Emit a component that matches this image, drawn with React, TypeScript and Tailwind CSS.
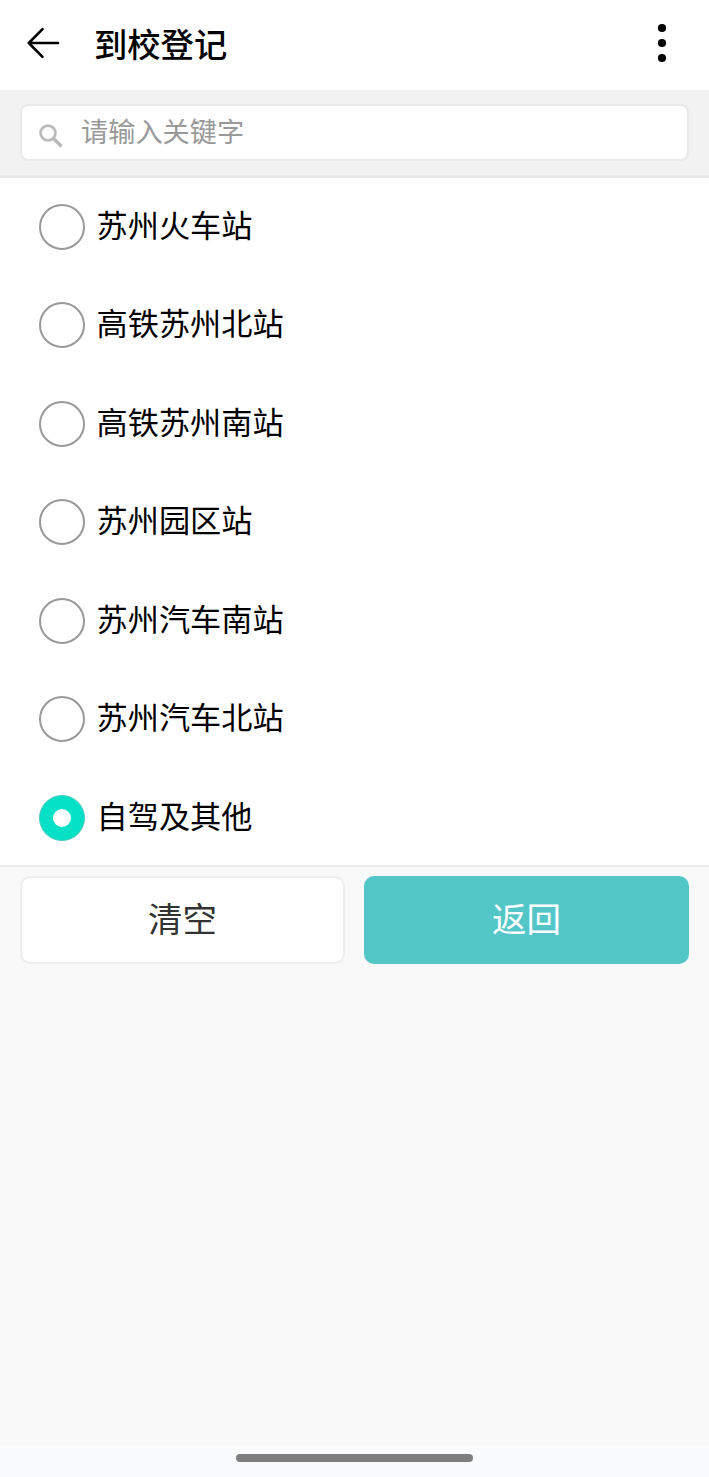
import { useState } from 'react';

const stations = [
  '苏州火车站',
  '高铁苏州北站',
  '高铁苏州南站',
  '苏州园区站',
  '苏州汽车南站',
  '苏州汽车北站',
  '自驾及其他',
];

function Header() {
  return (
    <header className="flex h-[90px] shrink-0 items-center bg-white pb-1 pl-[27px] pr-[42px]">
      <button type="button" aria-label="返回上一页">
        <svg width="34" height="32" viewBox="0 0 34 32" fill="none" stroke="#000" strokeWidth="2.6" strokeLinecap="round" strokeLinejoin="round">
          <path d="M15.5 2.2 1.8 16 15.5 29.8M1.8 16H31" />
        </svg>
      </button>
      <h1 className="ml-[33px] grow pb-px text-[33.3px] leading-10 font-medium text-black">到校登记</h1>
      <button type="button" aria-label="更多">
        <svg width="10" height="40" viewBox="0 0 10 40" fill="#000">
          <circle cx="5" cy="5" r="4.1" />
          <circle cx="5" cy="20" r="4.1" />
          <circle cx="5" cy="35" r="4.1" />
        </svg>
      </button>
    </header>
  );
}

function SearchBar() {
  return (
    <div className="flex h-[88px] shrink-0 flex-col border-b-[3px] border-[#e8e8e8] bg-[#f2f2f2] px-5 pt-[14px]">
      <label className="flex h-[57px] items-center rounded-[8px] border-2 border-[#e9e9e9] bg-white pl-[17px]">
        <svg className="mt-[7px] shrink-0" width="24" height="24" viewBox="0 0 24 24" fill="none" stroke="#bbb">
          <circle cx="9" cy="9" r="7.4" strokeWidth="2.8" />
          <path d="m14.5 14.5 8 8" strokeWidth="3.4" />
        </svg>
        <span className="ml-[18px] pb-[5px] text-[27.2px] leading-9 text-[#999]">请输入关键字</span>
      </label>
    </div>
  );
}

export default function App() {
  const [selected, setSelected] = useState<string | null>('自驾及其他');
  return (
    <div className="flex h-[1477px] w-[709px] flex-col bg-[#f9f9f9] font-['Noto_Sans_CJK_SC',sans-serif]">
      <Header />
      <SearchBar />
      <div className="flex h-[689px] shrink-0 flex-col gap-[52.5px] border-b-2 border-[#ececec] bg-white pt-[25.5px] pl-[39px]">
        {stations.map((name) => (
          <button key={name} type="button" onClick={() => setSelected(name)} className="flex h-[46px] shrink-0 items-center">
            {selected === name ? (
              <span className="flex size-[46px] items-center justify-center rounded-full border border-[#4fcabd] bg-[#04e1c6]">
                <span className="size-[18px] rounded-full bg-white" />
              </span>
            ) : (
              <span className="size-[46px] rounded-full border-2 border-[#999] bg-white" />
            )}
            <span className="ml-[11.5px] pb-[6px] text-[31.2px] leading-[40px] text-black">{name}</span>
          </button>
        ))}
      </div>
      <div className="grid grid-cols-2 gap-[19px] px-5 pt-[9px]">
        <button type="button" onClick={() => setSelected(null)} className="h-[87.5px] rounded-[10px] border-2 border-[#eee] bg-white pb-[3px] text-[34.5px] text-[#333]">
          清空
        </button>
        <button type="button" className="h-[87.5px] rounded-[10px] bg-[#53c6c8] pb-[3px] text-[34.5px] text-white">
          返回
        </button>
      </div>
      <div className="mt-auto flex h-[31px] justify-center bg-[#fafbfc] pt-2">
        <div className="h-2 w-[237px] rounded-full bg-[#7e7e7e]" />
      </div>
    </div>
  );
}
